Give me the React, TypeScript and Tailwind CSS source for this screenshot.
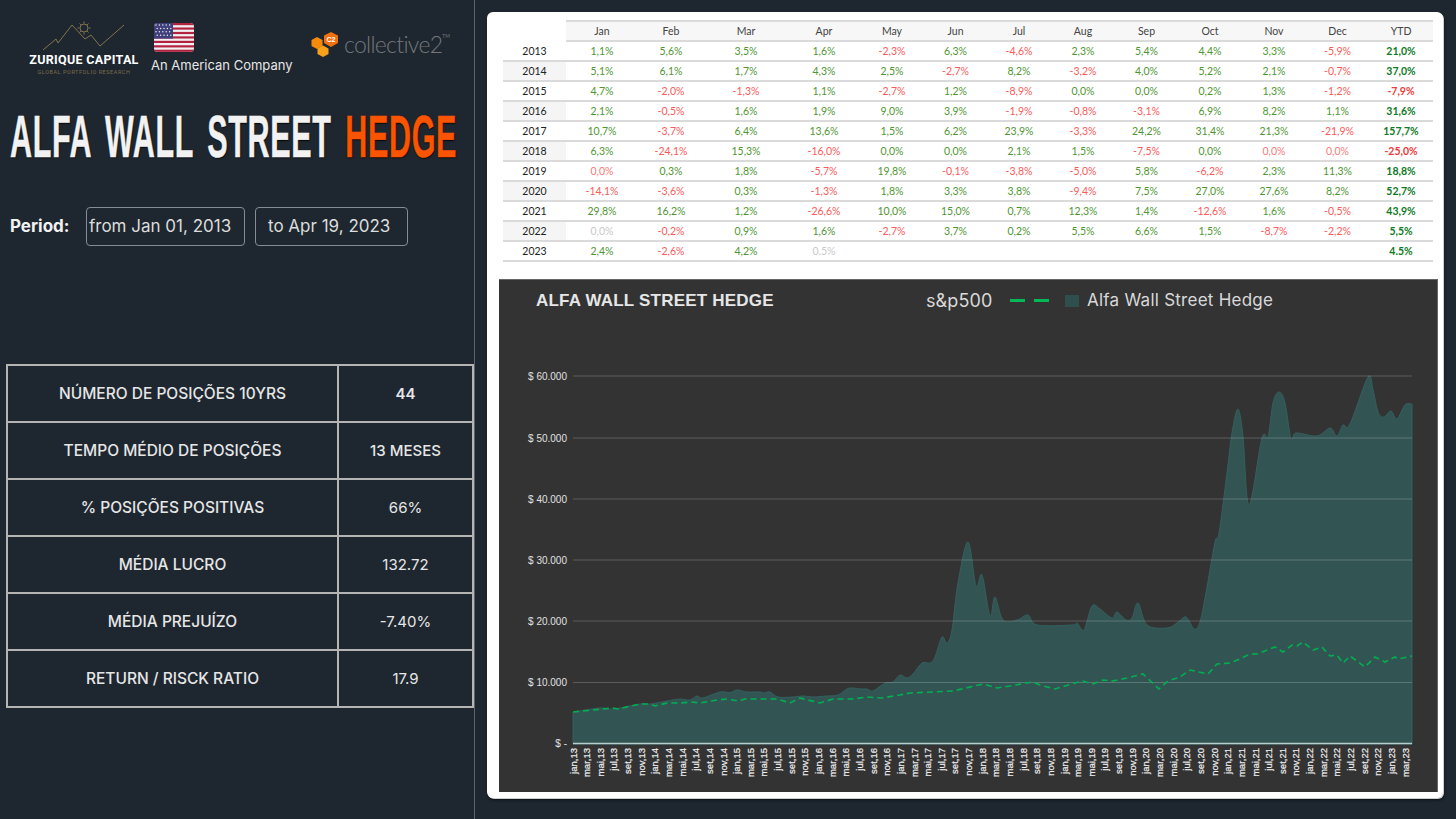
const months = ["Jan", "Feb", "Mar", "Apr", "May", "Jun", "Jul", "Aug", "Sep", "Oct", "Nov", "Dec", "YTD"]

// r: / g: prefix marks cells that are red or grey whatever the sign says
const returns: [string, string[]][] = [
  ["2013", ["1,1%", "5,6%", "3,5%", "1,6%", "-2,3%", "6,3%", "-4,6%", "2,3%", "5,4%", "4,4%", "3,3%", "-5,9%", "21,0%"]],
  ["2014", ["5,1%", "6,1%", "1,7%", "4,3%", "2,5%", "-2,7%", "8,2%", "-3,2%", "4,0%", "5,2%", "2,1%", "-0,7%", "37,0%"]],
  ["2015", ["4,7%", "-2,0%", "-1,3%", "1,1%", "-2,7%", "1,2%", "-8,9%", "0,0%", "0,0%", "0,2%", "1,3%", "-1,2%", "-7,9%"]],
  ["2016", ["2,1%", "-0,5%", "1,6%", "1,9%", "9,0%", "3,9%", "-1,9%", "-0,8%", "-3,1%", "6,9%", "8,2%", "1,1%", "31,6%"]],
  ["2017", ["10,7%", "-3,7%", "6,4%", "13,6%", "1,5%", "6,2%", "23,9%", "-3,3%", "24,2%", "31,4%", "21,3%", "-21,9%", "157,7%"]],
  ["2018", ["6,3%", "-24,1%", "15,3%", "-16,0%", "0,0%", "0,0%", "2,1%", "1,5%", "-7,5%", "0,0%", "r:0,0%", "r:0,0%", "-25,0%"]],
  ["2019", ["r:0,0%", "0,3%", "1,8%", "-5,7%", "19,8%", "-0,1%", "-3,8%", "-5,0%", "5,8%", "-6,2%", "2,3%", "11,3%", "18,8%"]],
  ["2020", ["-14,1%", "-3,6%", "0,3%", "-1,3%", "1,8%", "3,3%", "3,8%", "-9,4%", "7,5%", "27,0%", "27,6%", "8,2%", "52,7%"]],
  ["2021", ["29,8%", "16,2%", "1,2%", "-26,6%", "10,0%", "15,0%", "0,7%", "12,3%", "1,4%", "-12,6%", "1,6%", "-0,5%", "43,9%"]],
  ["2022", ["g:0,0%", "-0,2%", "0,9%", "1,6%", "-2,7%", "3,7%", "0,2%", "5,5%", "6,6%", "1,5%", "-8,7%", "-2,2%", "5,5%"]],
  ["2023", ["2,4%", "-2,6%", "4,2%", "g:0.5%", "", "", "", "", "", "", "", "", "4.5%"]],
]

const stats = [
  ["NÚMERO DE POSIÇÕES 10YRS", "44", "font-semibold"],
  ["TEMPO MÉDIO DE POSIÇÕES", "13 MESES", "font-medium"],
  ["% POSIÇÕES POSITIVAS", "66%", "font-normal"],
  ["MÉDIA LUCRO", "132.72", "font-normal"],
  ["MÉDIA PREJUÍZO", "-7.40%", "font-normal"],
  ["RETURN / RISCK RATIO", "17.9", "font-normal"],
]

const gridCols = "grid grid-cols-[63px_72px_66px_84px_72px_64px_63px_64px_64px_63px_64px_64px_63px_64px]"

// traced from the chart, in page pixels
const fund: [number, number][] = [
  [573, 712], [600, 708], [613, 709], [640, 704], [650, 704], [667, 701], [680, 699], [690, 700], [697, 696], [703, 698],
  [720, 692], [730, 692.7], [737, 690], [747, 692], [760, 692], [764, 693], [770, 692], [778, 697], [793, 697], [803, 696],
  [813, 697], [827, 696], [838, 695], [847, 689], [853, 688], [860, 689], [867, 689], [873, 691], [885, 683], [893, 682],
  [900, 675], [907, 678], [913, 674], [922, 663], [930, 663], [935, 657], [942, 637], [947, 643], [952, 630], [958, 583],
  [968, 542], [976, 586], [982, 575], [990, 616], [995, 597], [1003, 620], [1017, 620], [1028, 615], [1037, 625], [1072, 625],
  [1077, 623], [1084, 630], [1092, 606], [1100, 609], [1112, 618], [1117, 612], [1126, 620], [1132, 618], [1138, 603], [1147, 625],
  [1167, 628], [1177, 623], [1186, 617], [1194, 629], [1200, 622], [1207, 587], [1215, 542], [1219, 533], [1227, 473], [1232, 433],
  [1238, 409], [1243, 437], [1249, 505], [1262, 438], [1268, 437], [1273, 403], [1279, 392], [1285, 403], [1291, 439], [1296, 433],
  [1317, 436], [1330, 428], [1337, 436], [1343, 425], [1350, 424], [1368, 377], [1373, 390], [1378, 412], [1384, 417], [1391, 411],
  [1397, 419], [1405, 405], [1412, 404],
]

const sp500: [number, number][] = [
  [573, 712], [613, 708], [618, 709], [640, 704], [650, 704], [655, 706], [667, 703], [680, 703], [692, 702], [700, 703],
  [717, 700], [727, 699], [738, 701], [745, 699], [777, 699], [790, 703], [800, 698], [820, 703], [833, 699], [853, 699],
  [867, 697], [882, 698], [900, 695], [910, 693], [953, 691], [983, 684], [997, 688], [1010, 686], [1032, 682], [1043, 686],
  [1055, 689], [1075, 683], [1083, 681], [1093, 684], [1103, 680], [1113, 681], [1127, 678], [1143, 674], [1159, 689], [1168, 681],
  [1180, 677], [1190, 670], [1208, 674], [1217, 664], [1230, 663], [1240, 659], [1250, 654], [1257, 654], [1275, 647], [1283, 652],
  [1292, 645], [1297, 646], [1303, 642], [1313, 650], [1322, 647], [1330, 656], [1337, 655], [1343, 663], [1350, 656], [1365, 667],
  [1375, 657], [1385, 662], [1395, 657], [1398, 659], [1412, 656],
]

const gridLines: [string, number][] = [
  ["$ 60.000", 376], ["$ 50.000", 438], ["$ 40.000", 499], ["$ 30.000", 560], ["$ 20.000", 621], ["$ 10.000", 682.5],
]

const axisMonths = ["jan", "mar", "mai", "jul", "set", "nov"]
const axisLabels: string[] = []
for (let i = 0; i < 62; i++) {
  axisLabels.push(`${axisMonths[i % 6]},${13 + Math.floor(i / 6)}`)
}

function smoothPath(pts: [number, number][]) {
  let d = `M${pts[0][0]} ${pts[0][1]}`
  for (let i = 0; i < pts.length - 1; i++) {
    const p0 = pts[Math.max(i - 1, 0)]
    const p1 = pts[i]
    const p2 = pts[i + 1]
    const p3 = pts[Math.min(i + 2, pts.length - 1)]
    const c1x = p1[0] + (p2[0] - p0[0]) / 6
    const c1y = p1[1] + (p2[1] - p0[1]) / 6
    const c2x = p2[0] - (p3[0] - p1[0]) / 6
    const c2y = p2[1] - (p3[1] - p1[1]) / 6
    d += `C${c1x.toFixed(1)} ${c1y.toFixed(1)} ${c2x.toFixed(1)} ${c2y.toFixed(1)} ${p2[0]} ${p2[1]}`
  }
  return d
}

function cellColor(value: string, isYtd: boolean) {
  if (value.startsWith("g:")) return "text-[#c9c9c9]"
  if (value.startsWith("r:")) return "text-[#f77b7b]"
  if (value.startsWith("-")) return isYtd ? "text-[#f03a3a]" : "text-[#fb5a5a]"
  return isYtd ? "text-[#0e7a24]" : "text-[#4f9633]"
}

function ZuriqueLogo() {
  return (
    <div className="flex w-[110px] flex-col items-center">
      <svg width="90" height="32" viewBox="40 20 90 32" fill="none" stroke="#8f7c52" strokeWidth="0.9">
        <polyline points="44,50 57,39 59,43 73,25 86,39 92,35 101,46 125,25" />
        <circle cx="85" cy="28" r="4" />
        <path d="M85 21.5v2M85 32.5v2M78.5 28h2M89.5 28h2M80.5 23.5l1.4 1.4M88.1 31.1l1.4 1.4M89.5 23.5l-1.4 1.4M81.9 31.1l-1.4 1.4" />
      </svg>
      <div className="mt-[1px] whitespace-nowrap font-['Roboto',sans-serif] text-[12.5px] leading-[13px] font-bold tracking-[0.3px] text-white">
        ZURIQUE CAPITAL
      </div>
      <div className="mt-[2px] whitespace-nowrap font-['Roboto',sans-serif] text-[5.5px] leading-[8px] tracking-[0.55px] text-[#7d6c48]">
        GLOBAL PORTFOLIO RESEARCH
      </div>
    </div>
  )
}

function Flag() {
  const stripes = [0, 1, 2, 3, 4, 5, 6]
  const stars: [number, number][] = []
  for (let r = 0; r < 4; r++) {
    for (let c = 0; c < 5; c++) stars.push([2 + c * 3.4 + (r % 2) * 1.2, 2 + r * 3.4])
  }
  return (
    <svg width="40" height="29" viewBox="0 0 40 29" className="ml-[3px] rounded-[4px]">
      <rect width="40" height="29" fill="#f1f1f4" />
      {stripes.map((s) => (
        <rect key={s} y={s * 4.45} width="40" height="2.2" fill="#b3233f" />
      ))}
      <rect width="19" height="15.6" fill="#3f3f7c" />
      {stars.map(([x, y], i) => (
        <circle key={i} cx={x} cy={y} r="0.75" fill="#e8e8f2" />
      ))}
    </svg>
  )
}

function Collective2Logo() {
  return (
    <div className="flex items-center">
      <svg width="28" height="26" viewBox="0 0 28 26">
        <polygon points="6,6 11.5,9 11.5,15 6,18 0.5,15 0.5,9" fill="#f58a0b" />
        <polygon points="20,1 27,4.5 27,12 20,16 13,12 13,4.5" fill="#f0700f" />
        <polygon points="12,14.5 17.5,17.5 17.5,23 12,26 6.5,23 6.5,17.5" fill="#f7a01c" />
        <text x="20" y="11" textAnchor="middle" fontSize="7" fontWeight="700" fontFamily="Liberation Sans, sans-serif" fill="#ffffff">C2</text>
      </svg>
      <span className="ml-[5px] font-['Lato',sans-serif] text-[23px] leading-none font-light tracking-[-0.7px] text-[#73767a]">collective2</span>
      <span className="mb-[14px] font-['Lato',sans-serif] text-[5px] text-[#73767a]">TM</span>
    </div>
  )
}

function Sidebar() {
  return (
    <aside className="flex h-[819px] w-[475px] shrink-0 flex-col overflow-hidden border-r border-[#5c626a] font-['Inter',sans-serif]">
      <div className="flex h-[85px] items-start pt-[20px] pl-[29px]">
        <ZuriqueLogo />
        <div className="ml-[12px] flex w-[144px] flex-col items-start pt-[3px]">
          <Flag />
          <div className="mt-[5px] whitespace-nowrap text-[13px] leading-[16px] text-[#e6e6e6]">An American Company</div>
        </div>
        <div className="ml-[16px] pt-[11px]">
          <Collective2Logo />
        </div>
      </div>

      <div className="mt-[17px] h-[70px] pl-[10px]">
        <h1 className="w-[448px] origin-left scale-x-[0.518] whitespace-nowrap font-['Liberation_Sans',sans-serif] text-[59px] leading-[70px] font-bold tracking-[1.2px] text-[#f2f2f2] [-webkit-text-stroke:0.5px] [word-spacing:9px] [text-shadow:1px_1px_2px_#000]">
          ALFA WALL STREET <span className="text-[#fa5400]">HEDGE</span>
        </h1>
      </div>

      <div className="mt-[35px] flex items-center pl-[10px]">
        <span className="w-[76px] text-[17px] font-bold text-[#f2f2f2]">Period:</span>
        <div className="flex h-[39px] w-[159px] items-center rounded-[4px] border border-[#858c94] pl-[2px] text-[17px] text-[#dcdcdc]">from Jan 01, 2013</div>
        <div className="ml-[10px] flex h-[39px] w-[153px] items-center rounded-[4px] border border-[#858c94] pl-[12px] text-[17px] text-[#dcdcdc]">to Apr 19, 2023</div>
      </div>

      <div className="mt-[118px] ml-[6px] w-[468px] border-2 border-b-0 border-[#b4b4b4]">
        {stats.map(([label, value, weight]) => (
          <div key={label} className="grid h-[57px] grid-cols-[331px_1fr] border-b-2 border-[#b4b4b4]">
            <div className="flex items-center justify-center border-r-2 border-[#b4b4b4] pt-[1px] text-[15.5px] font-medium text-[#e6e6e6]">{label}</div>
            <div className={`flex items-center justify-center pt-[1px] text-[15px] text-[#e6e6e6] ${weight}`}>{value}</div>
          </div>
        ))}
      </div>
    </aside>
  )
}

function ReturnsTable() {
  return (
    <div className="ml-[16px] w-[930px] font-['Lato',sans-serif] text-[10.5px]">
      <div className={gridCols}>
        <div />
        {months.map((m) => (
          <div key={m} className="flex h-[22px] items-center justify-center border-y-2 border-[#dadada] bg-[#f7f7f7] pt-[1px] text-[#444444]">
            {m}
          </div>
        ))}
      </div>
      {returns.map(([year, values], rowIdx) => (
        <div key={year} className={`${gridCols} h-[20px] border-b-2 border-[#dadada]`}>
          <div className={`flex items-center justify-center pt-[2px] text-[#222222] ${rowIdx % 2 === 1 ? "bg-[#f5f5f5]" : ""}`}>{year}</div>
          {values.map((v, i) => (
            <div key={i} className={`flex items-center justify-center pt-[2px] ${i === 12 ? "font-bold" : ""} ${cellColor(v, i === 12)}`}>
              {v.replace(/^[rg]:/, "")}
            </div>
          ))}
        </div>
      ))}
    </div>
  )
}

function HedgeChart() {
  return (
    <div className="mt-[17px] ml-[12px] flex h-[513px] w-[939px] flex-col border-t border-r border-[#666666] bg-[#333333]">
      <div className="flex h-[41px] shrink-0 items-center">
        <span className="ml-[37px] w-[390px] font-['Liberation_Sans',sans-serif] text-[17px] font-bold tracking-[0.2px] text-[#e6e6e6]">ALFA WALL STREET HEDGE</span>
        <div className="flex items-center font-['Inter',sans-serif] text-[17px] text-[#d9d9d9]">
          <span className="w-[84px] text-[18px] tracking-[0.1px]">s&amp;p500</span>
          <span className="h-[3px] w-[15px] bg-[#00b856]" />
          <span className="ml-[9px] h-[3px] w-[15px] bg-[#00b856]" />
          <span className="ml-[16px] h-[12px] w-[14px] bg-[#2f4f4f]" />
          <span className="ml-[8px] tracking-[0.25px]">Alfa Wall Street Hedge</span>
        </div>
      </div>
      <svg viewBox="499 321 939 471" className="block h-[471px] w-[939px]" fontFamily="Liberation Sans, sans-serif">
        <path d={`${smoothPath(fund)}L1412 744L573 744Z`} fill="#325554" stroke="#33605f" strokeWidth="1" />
        {gridLines.map(([label, y]) => (
          <g key={label}>
            <line x1="573" x2="1412" y1={y} y2={y} stroke="#ffffff" strokeOpacity="0.2" strokeWidth="1.2" />
            <text x="567" y={y + 3.5} textAnchor="end" fontSize="10" fill="#e0e0e0">{label}</text>
          </g>
        ))}
        <line x1="573" x2="1412" y1="743.5" y2="743.5" stroke="#b5cdcb" strokeWidth="1.6" />
        <text x="567" y="747" textAnchor="end" fontSize="10" fill="#e0e0e0">$ -</text>
        <polyline
          points={sp500.map((p) => p.join(",")).join(" ")}
          fill="none"
          stroke="#00b050"
          strokeWidth="1.6"
          strokeDasharray="6 4"
        />
        {axisLabels.map((label, i) => {
          const x = 576.5 + i * 13.64
          return (
            <text key={label} x={x} y="748" textAnchor="end" fontSize="9.5" fill="#ededed" stroke="#ededed" strokeWidth="0.2" transform={`rotate(-90 ${x} 748)`}>
              {label}
            </text>
          )
        })}
      </svg>
    </div>
  )
}

export default function App() {
  return (
    <div className="flex h-[819px] w-[1456px] overflow-hidden bg-[#1e2730]">
      <Sidebar />
      <main className="pt-[12px] pl-[12px]">
        <div className="h-[786px] w-[956px] rounded-[6px] bg-[#ffffff] pt-[8px] shadow-[1px_1px_0_#cfcfcf,1px_2px_3px_#0b0f14]">
          <ReturnsTable />
          <HedgeChart />
        </div>
      </main>
    </div>
  )
}
